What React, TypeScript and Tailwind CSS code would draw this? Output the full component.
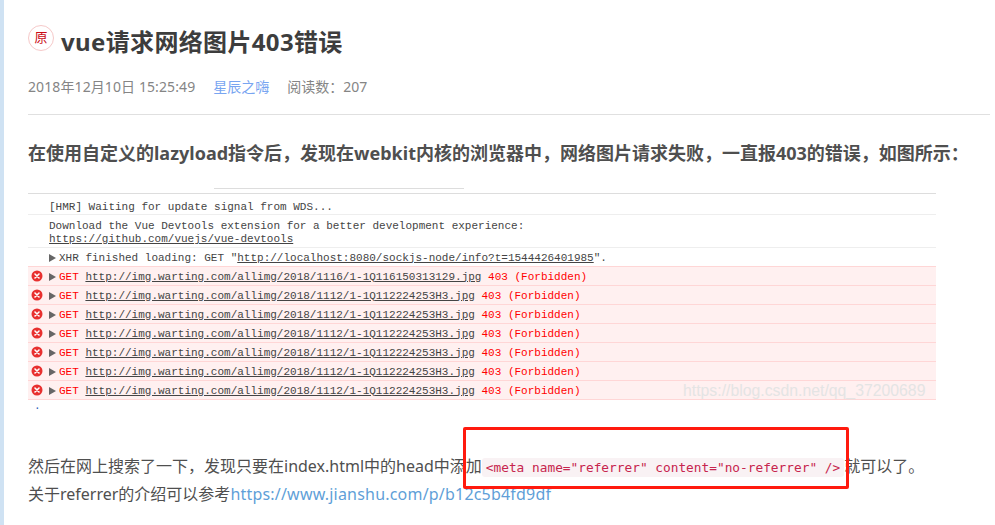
import React from "react";

const sans = { fontFamily: '"Noto Sans", "Noto Sans CJK SC", sans-serif' };

function ErrIcon() {
  return (
    <svg width="12" height="12" viewBox="0 0 12 12" className="absolute left-[3px] top-[3px]">
      <circle cx="6" cy="6" r="5.5" fill="#e8302f" />
      <path d="M4 4l4 4M8 4l-4 4" stroke="#fff" strokeWidth="1.6" strokeLinecap="round" />
    </svg>
  );
}

function Arrow() {
  return (
    <svg width="7" height="8" viewBox="0 0 7 8" className="mr-[3px] shrink-0">
      <path d="M0 0l7 4-7 4z" fill="#666" />
    </svg>
  );
}

function ErrorRow({ url }: { url: string }) {
  return (
    <div className="relative flex h-[19px] items-center whitespace-pre border-b border-[#ffd6d6] bg-[#fff0f0] pl-[21px] pt-[2px] text-[#f00]">
      <ErrIcon />
      <Arrow />
      <span>GET </span>
      <span className="text-[#444] underline">{url}</span>
      <span> 403 (Forbidden)</span>
    </div>
  );
}

const urlA = "http://img.warting.com/allimg/2018/1116/1-1Q116150313129.jpg";
const urlB = "http://img.warting.com/allimg/2018/1112/1-1Q112224253H3.jpg";

export default function App() {
  return (
    <div className="flex h-[525px] w-[995px] overflow-hidden bg-white" style={sans}>
      <div className="w-[4px] shrink-0 bg-[#cfe2f3]" />
      <main className="relative w-[962px] pl-[24px] pt-[25px]">
        <div className="flex items-start">
          <div className="flex h-[26px] w-[26px] items-center justify-center rounded-full border border-[#f6c9c9] text-[13px] text-[#ca0c16]">
            原
          </div>
          <h1 className="ml-[7px] text-[24px] font-bold leading-[33px] tracking-[0.35px] text-[#3d3d3d]">vue请求网络图片403错误</h1>
        </div>
        <div className="mt-[17px] flex h-[22px] items-center text-[14px] text-[#858585]">
          <span className="tracking-[0.1px]">2018年12月10日 15:25:49</span>
          <span className="ml-[18px] text-[#78a5f1]">星辰之嗨</span>
          <span className="ml-[18px]">阅读数：207</span>
        </div>
        <div className="mt-[17px] h-px w-[962px] bg-[#e0e0e0]" />
        <p className="mt-[25px] whitespace-nowrap text-[18px] font-bold leading-[26px] text-[#4f4f4f]">
          在使用自定义的lazyload指令后，发现在webkit内核的浏览器中，网络图片请求失败，一直报403的错误，如图所示：
        </p>

        <div className="ml-[186px] mt-[22px] h-px w-[250px] bg-[#ddd]" />
        <section
          className="mt-[4px] w-[908px] border-t border-[#ddd] text-[11px] leading-[13px] text-[#444]"
          style={{ fontFamily: '"Liberation Mono", monospace' }}
        >
          <div className="flex h-[21px] items-center border-b border-[#eee] pl-[21px] pt-[6px]">
            [HMR] Waiting for update signal from WDS...
          </div>
          <div className="h-[33px] border-b border-[#eee] pl-[21px] pt-[5px]">
            <div>Download the Vue Devtools extension for a better development experience:</div>
            <div className="underline">https://github.com/vuejs/vue-devtools</div>
          </div>
          <div className="flex h-[19px] items-center whitespace-pre border-b border-[#ffd6d6] pl-[21px] pt-[2px]">
            <Arrow />
            <span>XHR finished loading: GET "</span>
            <span className="underline">http://localhost:8080/sockjs-node/info?t=1544426401985</span>
            <span>".</span>
          </div>
          <ErrorRow url={urlA} />
          {[0, 1, 2, 3, 4, 5].map((i) => (
            <ErrorRow key={i} url={urlB} />
          ))}
          <div className="pl-[6px] text-[#2b5fb8]">.</div>
        </section>

        <p className="mt-[40px] whitespace-nowrap text-[16px] leading-[26px] text-[#4f4f4f]">
          然后在网上搜索了一下，发现只要在index.html中的head中添加
          <code
            className="rounded-[3px] bg-[#f9f2f4] px-[4px] py-[2px] text-[12.8px] text-[#c7254e]"
            style={{ fontFamily: '"DejaVu Sans Mono", monospace' }}
          >
            {'<meta name="referrer" content="no-referrer" />'}
          </code>
          就可以了。
        </p>
        <p className="whitespace-nowrap text-[16px] leading-[26px] text-[#4f4f4f]">
          关于referrer的介绍可以参考<span className="tracking-[0.2px] text-[#5f9fd8]">https://www.jianshu.com/p/b12c5b4fd9df</span>
        </p>

        <div
          className="absolute left-[679px] top-[379px] text-[15.8px] text-[#e4e4e4]"
          style={{ fontFamily: '"Liberation Sans", sans-serif' }}
        >
          https://blog.csdn.net/qq_37200689
        </div>
        <div className="absolute left-[459px] top-[427px] h-[62px] w-[386px] rounded-[2px] border-[3px] border-[#ff1a0e]" />
      </main>
    </div>
  );
}
